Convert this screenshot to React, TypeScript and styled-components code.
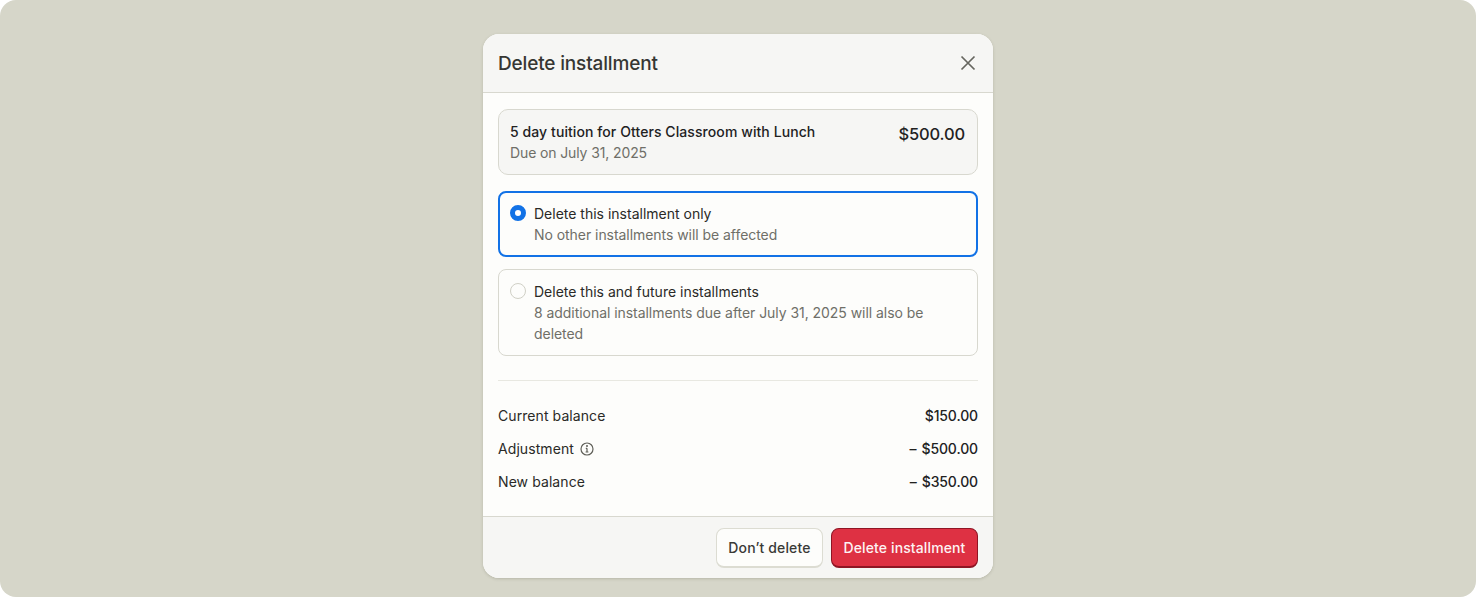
import React from "react";
import styled, { createGlobalStyle } from "styled-components";

const Global = createGlobalStyle`
  html, body { margin: 0; padding: 0; background: #fff; }
  body { font-family: Inter, "Liberation Sans", sans-serif; }
  * { box-sizing: border-box; }
`;

const Stage = styled.div`
  width: 1476px;
  height: 597px;
  background: #d6d6c9;
  border-radius: 16px;
  overflow: hidden;
  display: flex;
  justify-content: center;
  padding: 34px 0 0 0;
`;

const Modal = styled.div`
  width: 510px;
  height: 544px;
  background: #fdfdfb;
  border-radius: 16px;
  overflow: hidden;
  display: flex;
  flex-direction: column;
  box-shadow: 0 1px 3px rgba(90, 90, 70, 0.25);
`;

const Header = styled.div`
  height: 59px;
  flex: none;
  display: flex;
  align-items: center;
  justify-content: space-between;
  padding: 0 16px 0 15px;
  background: #f6f6f4;
  border-bottom: 1px solid #d8d8cf;
`;

const Title = styled.div`
  font-size: 19px;
  font-weight: 500;
  letter-spacing: -0.16px;
  color: #363633;
`;

const CloseButton = styled.button`
  border: 0;
  background: none;
  padding: 0;
  display: flex;
  color: #66665f;
`;

const Body = styled.div`
  flex: 1;
  padding: 16px 15px 0;
  display: flex;
  flex-direction: column;
`;

const SummaryCard = styled.div`
  height: 66px;
  border: 1px solid #d8d8cf;
  border-radius: 10px;
  background: #f6f6f4;
  padding: 11px 12px 0 11px;
  display: flex;
  justify-content: space-between;
`;

const Primary = styled.div`
  font-size: 14px;
  line-height: 21px;
  font-weight: 500;
  color: #22221f;
  letter-spacing: 0.08px;
`;

const Secondary = styled.div`
  font-size: 14px;
  line-height: 21px;
  font-weight: 400;
  color: #6f6f68;
  letter-spacing: -0.12px;
`;

const Hint = styled(Secondary)`
  letter-spacing: -0.05px;
`;

const Price = styled.div`
  font-size: 16.5px;
  line-height: 26px;
  font-weight: 500;
  color: #22221f;
  letter-spacing: -0.15px;
`;

const Option = styled.div<{ $selected?: boolean }>`
  display: flex;
  gap: 8px;
  border-radius: 8px;
  padding: ${(p) => (p.$selected ? "10px" : "11px")};
  border: ${(p) => (p.$selected ? "2px solid #1272e6" : "1px solid #d8d8cf")};
  margin-top: ${(p) => (p.$selected ? "16px" : "12px")};
`;

const Radio = styled.span<{ $selected?: boolean }>`
  width: 16px;
  height: 16px;
  flex: none;
  margin-top: 2px;
  border-radius: 50%;
  background: ${(p) => (p.$selected ? "#fff" : "#fdfdfb")};
  border: ${(p) => (p.$selected ? "5px solid #1272e6" : "1px solid #d0d0c6")};
`;

const OptionLabel = styled.div`
  font-size: 14px;
  line-height: 21px;
  font-weight: 400;
  color: #2a2a27;
  letter-spacing: 0;
`;

const Divider = styled.div`
  height: 1px;
  background: #e8e8e1;
  margin: 24px 0 18px;
`;

const Row = styled.div`
  height: 33px;
  display: flex;
  align-items: center;
  justify-content: space-between;
`;

const RowLabel = styled.div`
  display: flex;
  align-items: center;
  gap: 6px;
  font-size: 14px;
  color: #2a2a27;
  letter-spacing: 0.08px;
`;

const RowValue = styled.div`
  font-size: 14px;
  font-weight: 500;
  color: #22221f;
  letter-spacing: -0.12px;
  word-spacing: 1.5px;
`;

const Footer = styled.div`
  height: 62px;
  flex: none;
  display: flex;
  align-items: center;
  justify-content: flex-end;
  gap: 8px;
  padding: 1px 15px 0;
  background: #f6f6f4;
  border-top: 1px solid #d8d8cf;
`;

const Button = styled.button<{ $danger?: boolean }>`
  height: 40px;
  padding: 0 11.5px;
  border-radius: 8px;
  font-family: inherit;
  font-size: 14px;
  font-weight: 500;
  letter-spacing: 0.12px;
  color: ${(p) => (p.$danger ? "#fdf3f3" : "#3a3a36")};
  background: ${(p) => (p.$danger ? "#de3143" : "#fdfdfb")};
  border: 1px solid ${(p) => (p.$danger ? "#8f1524" : "#dcdcd2")};
  border-bottom-width: 2px;
`;

export default function App() {
  return (
    <Stage>
      <Global />
      <Modal>
        <Header>
          <Title>Delete installment</Title>
          <CloseButton aria-label="Close">
            <svg width="18" height="18" viewBox="0 0 18 18" fill="none" stroke="currentColor" strokeWidth="1.7">
              <path d="M2.5 2.5 15.5 15.5M15.5 2.5 2.5 15.5" />
            </svg>
          </CloseButton>
        </Header>
        <Body>
          <SummaryCard>
            <div>
              <Primary>5 day tuition for Otters Classroom with Lunch</Primary>
              <Secondary>Due on July 31, 2025</Secondary>
            </div>
            <Price>$500.00</Price>
          </SummaryCard>
          <Option $selected>
            <Radio $selected />
            <div>
              <OptionLabel>Delete this installment only</OptionLabel>
              <Hint>No other installments will be affected</Hint>
            </div>
          </Option>
          <Option>
            <Radio />
            <div>
              <OptionLabel>Delete this and future installments</OptionLabel>
              <Hint>8 additional installments due after July 31, 2025 will also be deleted</Hint>
            </div>
          </Option>
          <Divider />
          <Row>
            <RowLabel>Current balance</RowLabel>
            <RowValue>$150.00</RowValue>
          </Row>
          <Row>
            <RowLabel>
              Adjustment
              <svg width="14" height="14" viewBox="0 0 14 14" fill="none" stroke="#5f5f58" strokeWidth="1.2">
                <circle cx="7" cy="7" r="6" />
                <path d="M7 6.2V10M5.8 6.3H7M5.6 10H8.4" />
                <circle cx="7" cy="4.1" r="0.4" fill="#5f5f58" />
              </svg>
            </RowLabel>
            <RowValue>– $500.00</RowValue>
          </Row>
          <Row>
            <RowLabel>New balance</RowLabel>
            <RowValue>– $350.00</RowValue>
          </Row>
        </Body>
        <Footer>
          <Button>Don’t delete</Button>
          <Button $danger>Delete installment</Button>
        </Footer>
      </Modal>
    </Stage>
  );
}
